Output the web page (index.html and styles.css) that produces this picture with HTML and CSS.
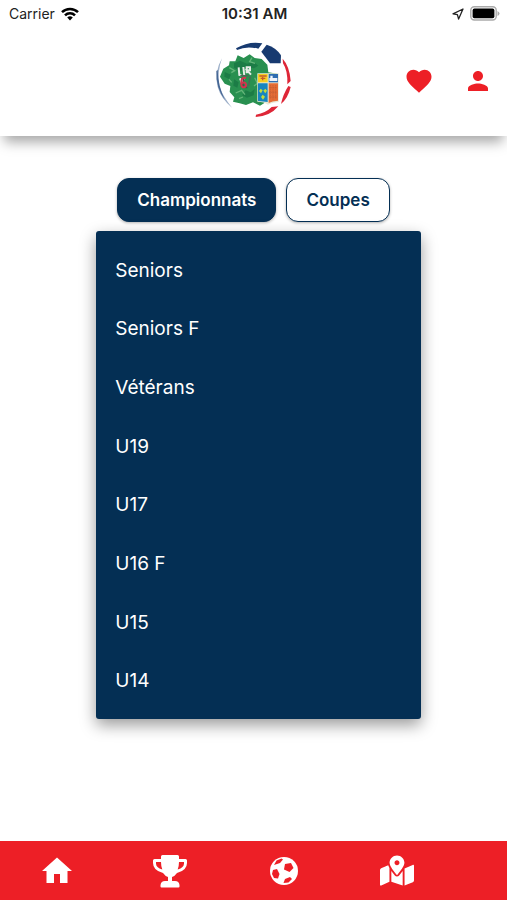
FILE: index.html
```html
<!DOCTYPE html>
<html lang="fr">
<head>
  <meta charset="UTF-8"/>
  <meta name="viewport" content="width=device-width,initial-scale=1.0"/>
  <title>Championnats</title>
  <link rel="stylesheet" href="styles.css">
</head>
<body>
  <header>
    <div class="status">
      <div class="carrier">
        <span>Carrier</span>
        <svg width="18" height="14" viewBox="0 0 18 14" fill="none" stroke="#000" stroke-width="2.5">
          <path d="M1 5.2a11.3 11.3 0 0 1 16 0M4 8.4a7 7 0 0 1 10 0"/>
          <path d="M6.2 10.6a4 4 0 0 1 5.6 0L9 13.6z" fill="#000" stroke="none"/>
        </svg>
      </div>
      <time>10:31 AM</time>
      <div class="battery">
        <svg width="12" height="12" viewBox="0 0 12 12" fill="none" stroke="#222" stroke-width="1.3" stroke-linejoin="round">
          <path d="M11 1 1 5.8l4.4.8 1.2 4.4z"/>
        </svg>
        <svg width="30" height="15" viewBox="0 0 30 15">
          <rect x=".8" y=".8" width="25.4" height="13.2" rx="3.5" fill="#fff" stroke="#aaa" stroke-width="1.4"/>
          <rect x="2.6" y="2.6" width="21.8" height="9.6" rx="1.8"/>
          <path d="M27.500 5v5q2-1 2-2.500t-2-2.500z" fill="#aaa"/>
        </svg>
      </div>
    </div>

    <div class="topbar">
      <a class="logo" href="#" aria-label="Accueil">
        <svg width="90" height="86" viewBox="0 0 270 258">
          <!-- ball panels -->
          <path d="M81 37Q120 14 160 22L148 38Q112 29 84 42z" fill="#173a70"/>
          <path d="M173 26Q202 35 216 58L215 82H183L157 47z" fill="#173a70"/>
          <path d="M221 68Q242 91 245 135L235 145Q237 105 222 82z" fill="#de2637"/>
          <path d="M238 150L245 153Q237 187 216 204Q222 175 238 150z" fill="#de2637"/>
          <path d="M141 236Q170 231 188 213L208 211Q183 241 140 243z" fill="#de2637"/>
          <path d="M39 67Q15 108 26 153Q36 188 69 215Q39 177 31 150Q24 108 39 67z" fill="#9baec8"/>
          <path d="M22 105Q20 155 48 192Q27 150 26 102z" fill="#456694"/>
          <!-- map of the region -->
          <path d="M86 58L104 66 122 55 137 66 158 69 175 86 178 109 205 113 207 190 186 201 171 198 153 209 132 199 111 207 92 202 72 197 76 184 62 168 64 150 47 143 33 122 43 98 60 88 62 76 79 76z" fill="#299050"/>
          <path d="M75 82l18-8 21 9 20-5 14 11-13 8-21-4-17 11-22-8zM47 108l19 8-6 13-14-7zM75 130l14 9-4 16-12-6zM110 163l15 6 12-10-3 19-20 7-15-7z" fill="#1c7c46"/>
          <path d="M61 95l16 9-10 6M80 171l18-8 10 13M129 65l-7 12 16 5M137 125l8 17-10 8M60 130l8 9M90 188l12-5" fill="none" stroke="#64b579" stroke-width="4"/>
          <path d="M89 94l2 23 6 1M103 93l3 27M113 112V94h10v9h-9l12 13M93 127l5 12 7-13" fill="none" stroke="#e8ece8" stroke-width="6"/>
          <path d="M104 123l-2 27 13 5" fill="none" stroke="#46534c" stroke-width="5"/>
          <path d="M111 126q-12-4-14 9v10q0 10 9 9 8-4 4-12-5-5-12 0" fill="none" stroke="#d3324c" stroke-width="6"/>
          <path d="M94 119h24M124 121l-6 30" fill="none" stroke="#52625a" stroke-width="4"/>
          <!-- coats of arms -->
          <path d="M145 112h64v86q-20 1-32 8-11-9-32-9z" fill="#e8e9d5"/>
          <path d="M147 114h29v25h-29z" fill="#f7ce23"/>
          <path d="M179 114h28v25h-28z" fill="#2d6db0"/>
          <path d="M147 142h29v56l-29-3z" fill="#1785c0"/>
          <path d="M179 142h28v52q-18 1-28 7z" fill="#e56d35"/>
          <path d="M151 120h22M155 127h14M161 123v10" stroke="#c65b28" stroke-width="4"/>
          <path d="M181 126h24v9h-24zM184 119h7v9h-7z" fill="#eef4fa"/>
          <path d="M184 148v39M192 148v43M200 148v39M181 155h24M181 169h24M181 183h24" stroke="#ad5432" stroke-width="2" stroke-dasharray="3 3"/>
          <g fill="#c4dc3b">
            <path d="M155 158l6 5-5 9-6-7z"/>
            <path d="M169 158l5 6-5 8-6-8z"/>
            <path d="M161 176l7 6-6 9-6-8z"/>
          </g>
        </svg>
      </a>
      <nav class="actions">
        <a href="#" aria-label="Favoris">
          <svg width="30" height="30" viewBox="0 0 24 24"><path d="M12 21.350l-1.450-1.320C5.400 15.360 2 12.280 2 8.500 2 5.420 4.420 3 7.500 3c1.740 0 3.410.810 4.500 2.090C13.090 3.810 14.760 3 16.500 3 19.580 3 22 5.420 22 8.500c0 3.780-3.400 6.860-8.550 11.540z"/></svg>
        </a>
        <a href="#" aria-label="Profil">
          <svg width="30" height="30" viewBox="0 0 24 24"><path d="M12 12c2.210 0 4-1.790 4-4s-1.790-4-4-4-4 1.790-4 4 1.790 4 4 4zm0 2c-2.670 0-8 1.340-8 4v2h16v-2c0-2.660-5.330-4-8-4z"/></svg>
        </a>
      </nav>
    </div>
  </header>

  <main>
    <div class="tabs">
      <button class="tab active">Championnats</button>
      <button class="tab">Coupes</button>
    </div>
    <ul class="menu">
      <li><a href="#">Seniors</a></li>
      <li><a href="#">Seniors F</a></li>
      <li><a href="#">Vétérans</a></li>
      <li><a href="#">U19</a></li>
      <li><a href="#">U17</a></li>
      <li><a href="#">U16 F</a></li>
      <li><a href="#">U15</a></li>
      <li><a href="#">U14</a></li>
    </ul>
  </main>

  <nav class="bottom">
    <a href="#" aria-label="Accueil">
      <svg width="36" height="36" viewBox="0 0 24 24"><path d="M10 20v-6h4v6h5v-8h3L12 3 2 12h3v8z"/></svg>
    </a>
    <a href="#" aria-label="Compétitions">
      <svg width="36" height="34" viewBox="0 0 36 34">
        <path d="M10.500 1h15q1.500 0 1.500 1.500V5h6.500Q35 5 35 6.500V9q0 7.500-10 10-2.500 3.500-5 4v4h3q4 0 4.500 4v1.500q0 1-1 1h-17q-1 0-1-1V31q.5-4 4.500-4h3v-4q-2.500-.5-5-4Q1 16.500 1 9V6.500Q1 5 2.500 5H9V2.500Q9 1 10.500 1zM9 8H4v1.500q0 4 6.300 6Q9 12 9 8zM27 8q0 4-1.300 7.500 6.300-2 6.300-6V8z" fill-rule="evenodd"/>
      </svg>
    </a>
    <a href="#" aria-label="Matchs">
      <svg width="28" height="28" viewBox="0 0 28 28">
        <circle cx="14" cy="14" r="14"/>
        <g class="patch">
          <path d="M15 7l6-1 2.500 5-4 4-5.500-2.500z"/>
          <path d="M3 13l4-1 2.500 5-1.500 4.500-4-.5-2-4z"/>
          <path d="M15 22l5-2 2 2-3.500 3.500-5 .5z"/>
          <path d="M6.500 3.500l5-2 1.500 1-3 3.500-6 2z"/>
        </g>
      </svg>
    </a>
    <a href="#" aria-label="Carte">
      <svg width="34" height="31" viewBox="0 0 576 512">
        <path d="M288 0c-69.600 0-126 56.400-126 126 0 56.300 82.400 158.800 113.900 196.000 6.400 7.500 17.800 7.500 24.200 0C331.600 284.800 414 182.300 414 126 414 56.400 357.600 0 288 0zm0 168c-23.200 0-42-18.800-42-42s18.800-42 42-42 42 18.800 42 42-18.800 42-42 42zM20.100 216A32 32 0 0 0 0 245.700v250.300c0 11.300 11.400 19.100 21.900 14.900L160 448V214.900c-8.800-16-16.100-31.500-21.300-46.400zM288 359.700c-14.100 0-27.400-6.200-36.500-17-19.700-23.200-40.600-49.600-59.500-76.700v182l192 64V266c-18.900 27.100-39.800 53.500-59.500 76.700-9.100 10.800-22.400 17-36.500 17zm266.100-198.500L416 224v288l139.900-56a32 32 0 0 0 20.100-29.700V176c0-11.300-11.400-19.100-21.900-14.800z"/>
      </svg>
    </a>
  </nav>
</body>
</html>
```
FILE: styles.css
```css
:root {
  --navy: #042f54; --red: #ed1f26;
}
* { box-sizing:border-box; margin:0; padding:0; }
body {
  background:#fff; color:#222;
  font-family: Inter,"Liberation Sans",sans-serif;
  display:flex; flex-direction:column;
  min-height:100vh;
}
svg { display:block; }
header {
  background:#fff;
  box-shadow:0 10px 12px -4px rgba(0,0,0,0.35);
  padding-bottom:14px;
}
.status {
  display:grid; grid-template-columns:1fr auto 1fr;
  align-items:center;
  height:27px; padding:0 7px 0 9px;
  font-size:14px;
}
.status time { font-size:15px; font-weight:600; }
.carrier { display:flex; align-items:center; gap:6px; }
.battery {
  display:flex; align-items:center; justify-content:flex-end; gap:6px;
}
.topbar {
  display:grid; grid-template-columns:1fr auto 1fr;
  align-items:center;
  height:95px; padding:0 14px;
}
.logo { grid-column:2; }
.logo svg { margin-top:8px; }
.actions {
  display:flex; justify-content:flex-end; gap:29px;
  align-items:center; padding-top:12px;
}
.actions svg { fill:var(--red); }
main {
  flex:1; display:flex; flex-direction:column; align-items:center;
  padding:42px 0;
}
.tabs { display:flex; gap:10px; }
.tab {
  height:44px; padding:0 19px;
  border:1px solid var(--navy); border-radius:12px;
  background:#fff; color:var(--navy);
  font-family:inherit; font-size:17px; font-weight:600;
  box-shadow:0 1px 3px rgba(0,0,0,0.3);
  cursor:pointer;
}
.tab.active { background:var(--navy); color:#fff; }
.menu {
  display:flex; flex-direction:column;
  width:64%; min-height:488px;
  margin:9px 0 0 10px; padding:10px 0 9px;
  list-style:none;
  background:var(--navy); border-radius:3px;
  box-shadow:0 6px 16px rgba(0,0,0,0.4);
}
.menu li { flex:1; display:flex; }
.menu a {
  flex:1; display:flex; align-items:center;
  padding:0 19px;
  color:#fff; font-size:19px; text-decoration:none;
}
.bottom {
  display:flex; align-items:center;
  height:59px;
  background:var(--red);
}
.bottom a { flex:0 0 22.4%; display:flex; justify-content:center; }
.bottom svg { fill:#fff; }
.bottom .patch { fill:var(--red); }
```
